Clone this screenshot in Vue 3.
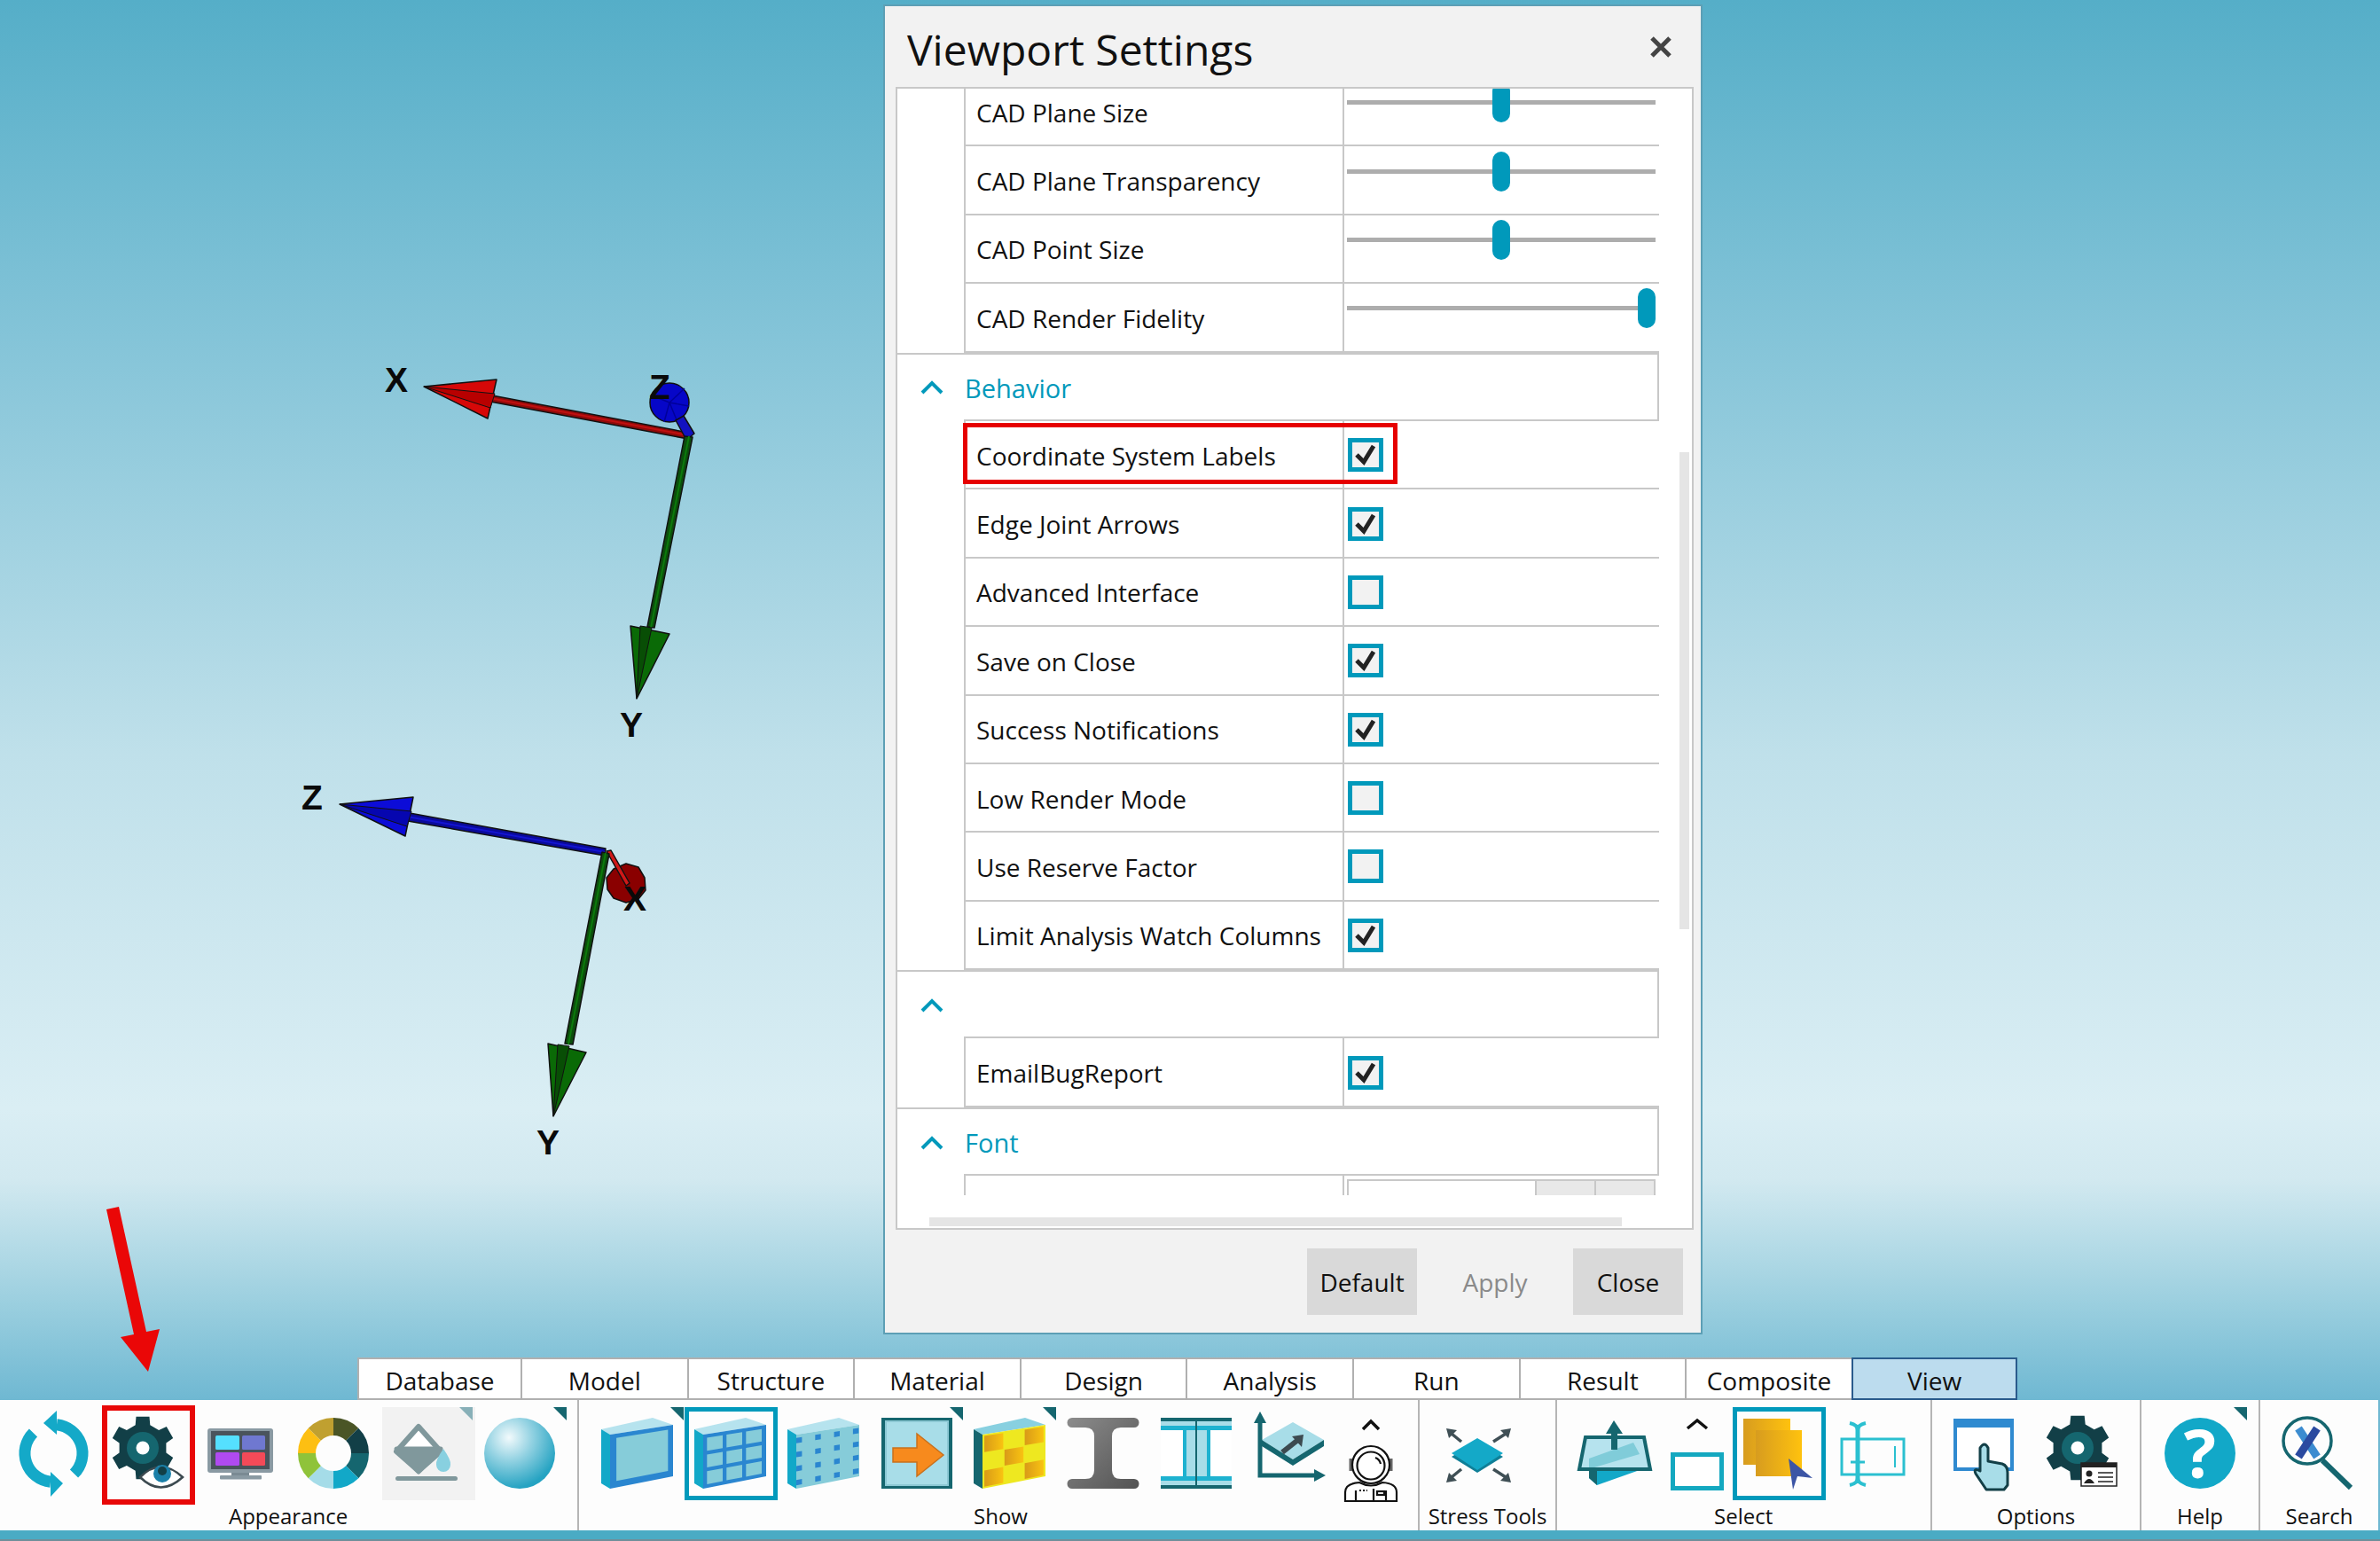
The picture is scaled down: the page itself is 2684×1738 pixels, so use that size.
<script setup>
const tabs = ['Database', 'Model', 'Structure', 'Material', 'Design', 'Analysis', 'Run', 'Result', 'Composite', 'View']

const items = [
  { kind: 'slider', label: 'CAD Plane Size', value: 50 },
  { kind: 'slider', label: 'CAD Plane Transparency', value: 50 },
  { kind: 'slider', label: 'CAD Point Size', value: 50 },
  { kind: 'slider', label: 'CAD Render Fidelity', value: 100 },
  { kind: 'section', label: 'Behavior' },
  { kind: 'check', label: 'Coordinate System Labels', on: true, flagged: true },
  { kind: 'check', label: 'Edge Joint Arrows', on: true },
  { kind: 'check', label: 'Advanced Interface', on: false },
  { kind: 'check', label: 'Save on Close', on: true },
  { kind: 'check', label: 'Success Notifications', on: true },
  { kind: 'check', label: 'Low Render Mode', on: false },
  { kind: 'check', label: 'Use Reserve Factor', on: false },
  { kind: 'check', label: 'Limit Analysis Watch Columns', on: true },
  { kind: 'section', label: '' },
  { kind: 'check', label: 'EmailBugReport', on: true },
  { kind: 'section', label: 'Font' },
  { kind: 'combo', label: '' }
]

function gear(cx, cy, ro, ri, n = 6) {
  const pts = []
  const step = (Math.PI * 2) / n
  for (let i = 0; i < n; i++) {
    const a = i * step - Math.PI / 2
    const w = step * 0.2
    const v = step * 0.3
    ;[[ri, -v], [ro, -w], [ro, w], [ri, v]].forEach(([r, d]) => {
      pts.push(`${(cx + r * Math.cos(a + d)).toFixed(1)},${(cy + r * Math.sin(a + d)).toFixed(1)}`)
    })
  }
  return pts.join(' ')
}
const gearA = gear(45, 46, 36, 27)
const gearB = gear(50, 46, 37, 28)

const donutColors = ['#4a5526', '#123f47', '#15666f', '#12a8c8', '#a5dce8', '#8fc33a', '#fdbf12', '#c0a030']
const donut = donutColors.map((color, i) => {
  const p = (r, k) => {
    const a = (k * Math.PI) / 4 - Math.PI / 2
    return `${(50 + r * Math.cos(a)).toFixed(2)} ${(52 + r * Math.sin(a)).toFixed(2)}`
  }
  return {
    color,
    d: `M${p(40, i)} A40 40 0 0 1 ${p(40, i + 1)} L${p(20, i + 1)} A20 20 0 0 0 ${p(20, i)} Z`
  }
})

const front = (u, v) => `${(21 + 71 * u).toFixed(1)},${(31 - 11 * u + v * (61 - 3 * u)).toFixed(1)}`
const quad = (u0, u1, v0, v1) => [front(u0, v0), front(u1, v0), front(u1, v1), front(u0, v1)].join(' ')

const gridCells = []
const checks = []
for (let r = 0; r < 3; r++) {
  for (let c = 0; c < 3; c++) {
    gridCells.push(quad(0.06 + c * 0.31, 0.31 + c * 0.31, 0.07 + r * 0.31, 0.31 + r * 0.31))
    if ((r + c) % 2 === 0) checks.push(quad(0.03 + c * 0.32, 0.33 + c * 0.32, 0.03 + r * 0.32, 0.33 + r * 0.32))
  }
}
const dots = []
for (let r = 0; r < 4; r++) {
  for (let c = 0; c < 4; c++) {
    dots.push(quad(c * 0.3, 0.09 + c * 0.3, 0.06 + r * 0.26, 0.16 + r * 0.26))
  }
}
</script>

<template>
  <div class="app">
    <main class="viewport">
      <svg class="canvas" width="2684" height="1531" viewBox="0 0 2684 1531">
        <g stroke="#111" stroke-width="1.5" stroke-linejoin="round">
          <polygon points="555,446 777,488 776,495 553,453" fill="#8f0a0a" />
          <line x1="555" y1="449.5" x2="776" y2="491" stroke="#c01010" stroke-width="2" />
          <polygon points="478,436 560,428 550,472" fill="#d60808" />
          <polygon points="478,436 558,444 553,460" fill="#b80000" stroke-width="1" />
          <circle cx="755" cy="454" r="22" fill="#0606c8" />
          <path d="M755 454 L735 446 M755 454 L749 476 M755 454 L764 476 M755 454 L777 458 M755 454 L772 438" stroke="#00009a" stroke-width="1.5" />
          <polygon points="762,474 771,469 783,489 774,496" fill="#1212c0" />
          <polygon points="772,492 781,493 738,708 730,707" fill="#0c4e0c" />
          <line x1="777" y1="492" x2="734" y2="708" stroke="#0c7a0c" stroke-width="2" />
          <polygon points="711,706 755,715 718,788" fill="#0a6a06" />
          <polygon points="722,706 735,708 718,788" fill="#084e05" stroke-width="1" />
        </g>
        <g stroke="#111" stroke-width="1.5" stroke-linejoin="round">
          <polygon points="462,917 683,957 682,965 460,926" fill="#0a0a9a" />
          <line x1="462" y1="921.5" x2="682" y2="961" stroke="#1414d0" stroke-width="2" />
          <polygon points="383,907 466,899 457,943" fill="#0c0cd8" />
          <polygon points="383,907 464,915 459,932" fill="#0606b0" stroke-width="1" />
          <polygon points="706,974 720,978 727,990 728,1004 720,1014 706,1018 692,1013 685,1003 684,990 692,980" fill="#8a0000" />
          <polygon points="684,960 689,959 710,996 706,999" fill="#d01818" />
          <polygon points="679,961 687,963 646,1178 637,1177" fill="#0c4e0c" />
          <line x1="683" y1="962" x2="641" y2="1178" stroke="#0c7a0c" stroke-width="2" />
          <polygon points="618,1177 661,1187 624,1259" fill="#0a6a06" />
          <polygon points="629,1178 642,1180 624,1259" fill="#084e05" stroke-width="1" />
        </g>
        <g class="axis-label">
          <text x="447" y="442">X</text>
          <text x="744" y="450">Z</text>
          <text x="712" y="831">Y</text>
          <text x="352" y="913">Z</text>
          <text x="716" y="1027">X</text>
          <text x="618" y="1302">Y</text>
        </g>
        <polygon points="120,1364 134,1361 165,1502 180,1499 167,1547 136,1508 151,1505" fill="#ea0707" />
      </svg>

      <section class="dialog">
        <header class="dialog-head">
          <h1>Viewport Settings</h1>
          <svg class="close" width="26" height="24" viewBox="0 0 26 24">
            <path d="M3 2 L23 22 M23 2 L3 22" stroke="#444" stroke-width="5" fill="none" />
          </svg>
        </header>

        <div class="panel">
          <div class="scroller">
            <div class="list">
              <template v-for="item in items" :key="item.label + item.kind">
                <div v-if="item.kind === 'section'" class="section">
                  <svg class="chev" width="26" height="16" viewBox="0 0 26 16">
                    <path d="M2 14 L13 3 L24 14" fill="none" stroke="#0099bb" stroke-width="4" />
                  </svg>
                  <span>{{ item.label }}</span>
                </div>
                <div v-else class="row">
                  <div class="cell-label">{{ item.label }}</div>
                  <div class="cell-value">
                    <div v-if="item.kind === 'slider'" class="slider">
                      <div class="track"></div>
                      <div class="thumb" :style="{ left: 'calc((100% - 20px) * ' + item.value / 100 + ')' }"></div>
                    </div>
                    <div v-else-if="item.kind === 'check'" class="box">
                      <svg v-if="item.on" width="30" height="28" viewBox="0 0 30 28">
                        <path d="M5 14 L13 22 L24 4" fill="none" stroke="#222" stroke-width="5" />
                      </svg>
                    </div>
                    <div v-else class="combo">
                      <span class="combo-field"></span>
                      <span class="combo-btn"></span>
                      <span class="combo-btn"></span>
                    </div>
                  </div>
                  <div v-if="item.flagged" class="flag"></div>
                </div>
              </template>
            </div>
          </div>
          <div class="hbar"><div class="hthumb"></div></div>
          <div class="vthumb"></div>
        </div>

        <footer class="dialog-foot">
          <button class="btn">Default</button>
          <button class="btn ghost">Apply</button>
          <button class="btn">Close</button>
        </footer>
      </section>
    </main>

    <nav class="tabs">
      <div v-for="t in tabs" :key="t" class="tab" :class="{ active: t === 'View' }">{{ t }}</div>
    </nav>

    <div class="ribbon">
      <div class="group g1">
        <div class="tools">
          <div class="tool">
            <svg viewBox="0 0 105 105">
              <g fill="none" stroke="#14a9c8" stroke-width="13">
                <path d="M53 19.7 A32.5 32.5 0 0 1 72.5 75" />
                <path d="M26.5 29 A32.5 32.5 0 0 0 46 84.3" />
              </g>
              <polygon points="53,4 38,18 53,31" fill="#14a9c8" />
              <polygon points="46,101 60,86 46,73" fill="#14a9c8" />
            </svg>
          </div>
          <div class="tool">
            <svg viewBox="0 0 105 105">
              <polygon :points="gearA" fill="#123f47" />
              <circle cx="45" cy="46" r="18" fill="#15666f" />
              <circle cx="45" cy="46" r="7.5" fill="#fff" />
              <path d="M42 79 Q65 56 90 79 Q65 102 42 79 Z" fill="#fff" stroke="#3c4a50" stroke-width="2.5" />
              <circle cx="67" cy="75" r="10" fill="#1a7fa8" />
              <circle cx="67" cy="72" r="5" fill="#123f47" />
            </svg>
            <div class="flag-tool"></div>
          </div>
          <div class="tool">
            <svg viewBox="0 0 105 105">
              <rect x="13" y="24" width="74" height="50" rx="3" fill="#8a9aa3" />
              <rect x="17" y="27" width="66" height="43" fill="#4a545c" />
              <rect x="22" y="32" width="27" height="16" rx="1.5" fill="#55e0ff" />
              <rect x="52" y="32" width="26" height="16" rx="1.5" fill="#6f78d0" />
              <rect x="22" y="51" width="27" height="15" rx="1.5" fill="#b04af0" />
              <rect x="52" y="51" width="26" height="15" rx="1.5" fill="#f44a58" />
              <rect x="40" y="74" width="20" height="4" fill="#7a8a93" />
              <rect x="27" y="77" width="47" height="4.5" rx="1" fill="#8a9aa3" />
            </svg>
          </div>
          <div class="tool">
            <svg viewBox="0 0 105 105">
              <path v-for="s in donut" :key="s.color" :d="s.d" :fill="s.color" />
            </svg>
          </div>
          <div class="tool shaded">
            <svg viewBox="0 0 105 105">
              <polygon points="87,0 102,0 102,15" fill="#88b0b8" />
              <path d="M41 22 L66 50 L41 72 L16 50 Z" fill="#fff" stroke="#80989c" stroke-width="6" stroke-linejoin="round" />
              <path d="M16 47 L66 47 L41 73 Z" fill="#80989c" stroke="#80989c" stroke-width="5" stroke-linejoin="round" />
              <path d="M69 47 Q78 60 77 65 A8 8 0 1 1 61 65 Q60 60 69 47 Z" fill="#88d0e0" />
              <rect x="15" y="78" width="70" height="5" rx="2.5" fill="#80989c" />
            </svg>
          </div>
          <div class="tool">
            <svg viewBox="0 0 105 105">
              <defs>
                <radialGradient id="ball" cx="35%" cy="28%" r="72%">
                  <stop offset="0" stop-color="#f2fafc" />
                  <stop offset="0.45" stop-color="#93d2e2" />
                  <stop offset="1" stop-color="#25a3c2" />
                </radialGradient>
              </defs>
              <ellipse cx="50" cy="52" rx="40" ry="40" fill="url(#ball)" />
              <polygon points="88,0 103,0 103,15" fill="#15666f" />
            </svg>
          </div>
        </div>
        <div class="cap">Appearance</div>
      </div>

      <div class="group g2">
        <div class="tools">
          <div class="tool">
            <svg viewBox="0 0 105 105">
              <polygon points="11,25 69,12 92,20 21,31" fill="#b6e3ee" />
              <polygon points="11,25 21,31 21,92 11,86" fill="#12a8c8" />
              <polygon points="21,31 92,20 92,78 21,92" fill="#2a86d0" />
              <polygon :points="quad(0.1, 0.92, 0.08, 0.88)" fill="#86ccd9" />
              <polygon points="89,0 104,0 104,15" fill="#15666f" />
            </svg>
          </div>
          <div class="tool selected">
            <svg viewBox="0 0 105 105">
              <polygon points="11,25 69,12 92,20 21,31" fill="#b6e3ee" />
              <polygon points="11,25 21,31 21,92 11,86" fill="#12a8c8" />
              <polygon points="21,31 92,20 92,78 21,92" fill="#2a86d0" />
              <polygon v-for="(c, i) in gridCells" :key="i" :points="c" fill="#86ccd9" />
            </svg>
          </div>
          <div class="tool">
            <svg viewBox="0 0 105 105">
              <polygon points="11,25 69,12 92,20 21,31" fill="#b6e3ee" />
              <polygon points="11,25 21,31 21,92 11,86" fill="#12a8c8" />
              <polygon points="21,31 92,20 92,78 21,92" fill="#86ccd9" />
              <polygon v-for="(c, i) in dots" :key="i" :points="c" fill="#2a86d0" />
            </svg>
          </div>
          <div class="tool">
            <svg viewBox="0 0 105 105">
              <rect x="12" y="12" width="80" height="80" fill="#15666f" />
              <rect x="17" y="16" width="70" height="72" fill="#a8dde8" stroke="#8cc8d4" stroke-width="2" />
              <polygon points="25,46 52,46 52,30 82,54 52,78 52,62 25,62" fill="#f78a1d" stroke="#c8701c" stroke-width="1.5" />
              <polygon points="89,0 104,0 104,15" fill="#15666f" />
            </svg>
          </div>
          <div class="tool">
            <svg viewBox="0 0 105 105">
              <defs>
                <linearGradient id="gold" x1="0" y1="0" x2="1" y2="0">
                  <stop offset="0" stop-color="#d99a18" />
                  <stop offset="1" stop-color="#f9c311" />
                </linearGradient>
              </defs>
              <polygon points="11,25 69,12 92,20 21,31" fill="#88d0e0" />
              <polygon points="11,25 21,31 21,92 11,86" fill="#15666f" />
              <polygon points="21,31 92,20 92,78 21,92" fill="#eee820" />
              <polygon v-for="(c, i) in checks" :key="i" :points="c" fill="url(#gold)" />
              <polygon points="89,0 104,0 104,15" fill="#15666f" />
            </svg>
          </div>
          <div class="tool">
            <svg viewBox="0 0 105 105">
              <defs>
                <linearGradient id="steel" x1="0" y1="0" x2="1" y2="1">
                  <stop offset="0" stop-color="#8c8c8c" />
                  <stop offset="1" stop-color="#525252" />
                </linearGradient>
              </defs>
              <path d="M17 12 H87 A5 5 0 0 1 87 23 H72 Q62 23 62 33 V71 Q62 81 72 81 H87 A5.5 5.5 0 0 1 87 92 H17 A5.5 5.5 0 0 1 17 81 H32 Q42 81 42 71 V33 Q42 23 32 23 H17 A5.5 5.5 0 0 1 17 12 Z" fill="url(#steel)" />
            </svg>
          </div>
          <div class="tool">
            <svg viewBox="0 0 105 105">
              <rect x="12" y="12" width="80" height="80" fill="#a8dde8" />
              <rect x="12" y="12" width="80" height="4" fill="#15666f" />
              <rect x="12" y="21" width="80" height="5" fill="#1eb2d0" />
              <rect x="12" y="78" width="80" height="5" fill="#1eb2d0" />
              <rect x="12" y="88" width="80" height="4" fill="#15666f" />
              <rect x="12" y="26" width="25" height="52" fill="#fff" />
              <rect x="68" y="26" width="24" height="52" fill="#fff" />
              <rect x="37" y="21" width="4" height="62" fill="#1eb2d0" />
              <rect x="64" y="21" width="4" height="62" fill="#1eb2d0" />
              <rect x="51" y="16" width="2" height="72" fill="#15666f" />
            </svg>
          </div>
          <div class="tool">
            <svg viewBox="0 0 105 105">
              <polygon points="56,17 91,37 56,59 21,37" fill="#a8dde8" />
              <polygon points="21,37 56,59 91,37 91,44 56,66 21,44" fill="#15666f" />
              <path d="M19 14 V77 H85" fill="none" stroke="#15666f" stroke-width="5" />
              <polygon points="19,5 26,18 12,18" fill="#15666f" />
              <polygon points="93,77 80,70 80,84" fill="#15666f" />
              <path d="M44 51 L63 36" stroke="#3c4a50" stroke-width="6" />
              <polygon points="68,31 66,45 55,33" fill="#3c4a50" />
            </svg>
          </div>
          <div class="tool narrow">
            <svg viewBox="0 0 70 105">
              <path d="M26 25 L35 16 L44 25" fill="none" stroke="#111" stroke-width="3.5" />
              <g fill="none" stroke="#111" stroke-width="2.2">
                <path d="M13 58 V72 M57 58 V72" stroke-width="5" stroke="#666" />
                <circle cx="35" cy="65" r="21" fill="#fff" />
                <circle cx="35" cy="66" r="15.5" />
                <path d="M40 57 Q45 59 46 64" />
                <path d="M6 106 V96 Q6 86 22 85 Q35 92 48 85 Q64 86 64 96 V106 Z" fill="#fff" />
                <path d="M18 94 V106 M52 94 V106 M38 92 V106" />
                <rect x="42" y="95" width="8" height="4" />
                <path d="M22 94 H31" stroke-dasharray="2 2" />
              </g>
            </svg>
          </div>
        </div>
        <div class="cap">Show</div>
      </div>

      <div class="group g3">
        <div class="tools">
          <div class="tool">
            <svg viewBox="0 0 105 105">
              <polygon points="51,38 80,56 51,74 22,56" fill="#0f7f97" />
              <polygon points="51,35 80,52 51,71 22,52" fill="#14a9c8" />
              <g fill="none" stroke="#3f4f55" stroke-width="3.5">
                <path d="M33 39 L22 30" />
                <path d="M69 39 L83 30" />
                <path d="M33 70 L22 79" />
                <path d="M69 70 L83 79" />
              </g>
              <g fill="#3f4f55">
                <polygon points="16,24 28,26 19,35" />
                <polygon points="89,24 77,26 86,35" />
                <polygon points="16,85 19,74 28,83" />
                <polygon points="89,85 86,74 77,83" />
              </g>
            </svg>
          </div>
        </div>
        <div class="cap">Stress Tools</div>
      </div>

      <div class="group g4">
        <div class="tools">
          <div class="tool">
            <svg viewBox="0 0 105 105">
              <polygon points="23,71 80,71 32,88 23,80" fill="#12a8c8" />
              <polygon points="23,71 32,71 32,88 23,80" fill="#15666f" />
              <polygon points="19,34 85,34 92,70 12,70" fill="#b6e3ee" />
              <polygon points="23,58 73,40 80,53 29,68 23,68" fill="#80ccd9" />
              <polygon points="19,34 85,34 92,70 12,70" fill="none" stroke="#15666f" stroke-width="4" />
              <rect x="48" y="28" width="7" height="20" fill="#15666f" />
              <polygon points="51,15 42,30 61,30" fill="#15666f" />
            </svg>
          </div>
          <div class="tool slim">
            <svg viewBox="0 0 80 105">
              <path d="M29 24 L40 15 L51 24" fill="none" stroke="#111" stroke-width="3.5" />
              <rect x="12.5" y="53.5" width="55" height="38" fill="#fff" stroke="#14a8c0" stroke-width="5" />
            </svg>
          </div>
          <div class="tool selected">
            <svg viewBox="0 0 105 105">
              <defs>
                <linearGradient id="amber" x1="0" y1="0" x2="1" y2="0">
                  <stop offset="0" stop-color="#d79c1f" />
                  <stop offset="1" stop-color="#ffc20e" />
                </linearGradient>
              </defs>
              <rect x="12" y="13" width="53" height="52" fill="url(#amber)" />
              <rect x="26" y="26" width="52" height="52" fill="url(#amber)" />
              <polygon points="63,58 90,80 73,78 68,93" fill="#3c55a5" />
            </svg>
          </div>
          <div class="tool">
            <svg viewBox="0 0 105 105">
              <g fill="none" stroke="#2bc0d0" stroke-width="3">
                <rect x="18" y="36" width="70" height="40" />
                <path d="M78 44 V68" stroke-width="2" />
                <path d="M36 20 V86" stroke-width="5" />
                <path d="M27 18 Q36 20 36 26 Q36 20 45 18" stroke-width="4" />
                <path d="M27 88 Q36 86 36 80 Q36 86 45 88" stroke-width="4" />
                <path d="M28 62 H44" stroke-width="3" />
              </g>
            </svg>
          </div>
        </div>
        <div class="cap">Select</div>
      </div>

      <div class="group g5">
        <div class="tools">
          <div class="tool">
            <svg viewBox="0 0 105 105">
              <rect x="17" y="15" width="64" height="55" fill="#fff" stroke="#2f8ad0" stroke-width="4" />
              <rect x="15" y="13" width="68" height="10" fill="#2f8ad0" />
              <path d="M45 46 Q50 38 54 46 V61 L70 64 Q76 66 76 74 V88 L72 93 H52 L40 75 Q37 68 45 72 Z" fill="#a8dde8" stroke="#123f47" stroke-width="3" stroke-linejoin="round" />
            </svg>
          </div>
          <div class="tool">
            <svg viewBox="0 0 105 105">
              <polygon :points="gearB" fill="#123f47" />
              <circle cx="50" cy="46" r="18" fill="#15666f" />
              <circle cx="50" cy="46" r="7.5" fill="#fff" />
              <rect x="54" y="63" width="40" height="26" fill="#fff" stroke="#222" stroke-width="1.5" />
              <rect x="54" y="63" width="40" height="5" fill="#222" />
              <circle cx="63" cy="75" r="3.5" fill="#222" />
              <path d="M57 86 Q63 76 69 86 Z" fill="#222" />
              <path d="M73 74 H90 M73 79 H90 M73 84 H90" stroke="#222" stroke-width="1.5" />
            </svg>
          </div>
        </div>
        <div class="cap">Options</div>
      </div>

      <div class="group g6">
        <div class="tools">
          <div class="tool">
            <svg viewBox="0 0 105 105">
              <ellipse cx="52" cy="52" rx="40" ry="40" fill="#12a8c8" />
              <text class="qmark" x="52" y="80">?</text>
              <polygon points="90,0 105,0 105,15" fill="#15666f" />
            </svg>
          </div>
        </div>
        <div class="cap">Help</div>
      </div>

      <div class="group g7">
        <div class="tools">
          <div class="tool">
            <svg viewBox="0 0 105 105">
              <path d="M31 24 L52 56" stroke="#3c8cd0" stroke-width="9" />
              <path d="M52 24 L31 56" stroke="#2a4aa0" stroke-width="9" />
              <ellipse cx="41" cy="38" rx="27" ry="26" fill="none" stroke="#15666f" stroke-width="3.5" />
              <path d="M58 60 L90 91" stroke="#15666f" stroke-width="6" />
            </svg>
          </div>
        </div>
        <div class="cap">Search</div>
      </div>
    </div>

    <div class="strip"></div>
  </div>
</template>

<style>
html, body { margin: 0; padding: 0; }
</style>

<style scoped>
.app {
  width: 2684px;
  height: 1738px;
  display: flex;
  flex-direction: column;
  overflow: hidden;
  font-family: "Open Sans", "Noto Sans", sans-serif;
  color: #111;
  background: linear-gradient(180deg, #55aec8 0, #84c4d8 380px, #bfe0ea 850px, #daeef4 1250px, #d2e9f0 1330px, #9bcfdf 1470px, #6fb8d2 1579px);
}
.viewport { position: relative; height: 1531px; flex: none; }
.canvas { position: absolute; left: 0; top: 0; overflow: visible; }
.axis-label text {
  font-family: "Liberation Sans", sans-serif;
  font-weight: 700;
  font-size: 39px;
  text-anchor: middle;
  fill: #0a0a0a;
}

.dialog {
  position: absolute;
  left: 996px;
  top: 5px;
  width: 920px;
  height: 1496px;
  display: flex;
  flex-direction: column;
  background: #f2f2f2;
  border: 2px solid #5d9fb5;
}
.dialog-head {
  height: 91px;
  display: flex;
  align-items: center;
  justify-content: space-between;
  padding: 0 32px 0 25px;
  flex: none;
}
.dialog-head h1 {
  margin: 0;
  font-size: 48px;
  font-weight: 400;
  color: #111;
  padding-top: 5px;
}

.panel {
  position: relative;
  margin: 0 8px 0 12px;
  flex: none;
  height: 1289px;
  box-sizing: border-box;
  background: #fff;
  border: 2.5px solid #c8c8c8;
  display: flex;
  flex-direction: column;
}
.scroller { height: 1248px; overflow: hidden; flex: none; }
.list { margin-top: -12px; width: 859px; }

.section {
  position: relative;
  height: 77.4px;
  box-sizing: border-box;
  border-top: 2px solid #c8c8c8;
  border-right: 2px solid #c8c8c8;
  display: flex;
  align-items: center;
  font-size: 29px;
  color: #0099bb;
  font-weight: 500;
}
.section::after {
  content: "";
  position: absolute;
  left: 75px;
  right: 0;
  bottom: 0;
  height: 2px;
  background: #c8c8c8;
}
.chev { margin-left: 26px; flex: none; }
.section span { margin-left: 24px; }

.row {
  position: relative;
  height: 77.4px;
  display: grid;
  grid-template-columns: 427px 357px;
  margin-left: 75px;
  box-sizing: border-box;
  border-bottom: 2px solid #c8c8c8;
}
.cell-label {
  display: flex;
  align-items: center;
  border-left: 2px solid #c8c8c8;
  padding: 2px 0 0 12px;
  font-size: 28px;
  white-space: nowrap;
}
.cell-value {
  display: flex;
  align-items: center;
  border-left: 2px solid #c8c8c8;
  padding: 0 3px;
}
.slider { position: relative; width: 348px; height: 45px; margin-top: -20px; }
.track { position: absolute; left: 0; right: 0; top: 20px; height: 5px; background: #adadad; }
.thumb { position: absolute; top: 0; width: 20px; height: 45px; border-radius: 10px; background: #0099bb; }
.box {
  width: 40px;
  height: 38px;
  margin-left: 1px;
  box-sizing: border-box;
  border: 5px solid #0099bb;
  background: #f2f2f2;
  display: flex;
  align-items: center;
  justify-content: center;
  margin-top: 1px;
}
.combo { display: flex; width: 348px; height: 60px; margin-top: 4px; align-self: flex-start; border: 2px solid #c8c8c8; box-sizing: border-box; }
.combo-field { flex: 1; background: #fff; }
.combo-btn { width: 67px; background: #e8e8e8; border-left: 2px solid #c8c8c8; box-sizing: border-box; }
.flag {
  position: absolute;
  left: -1px;
  top: 2px;
  width: 490px;
  height: 69px;
  box-sizing: border-box;
  border: 5px solid #e60000;
}
.hbar { flex: 1; position: relative; }
.hthumb { position: absolute; left: 36px; width: 781px; top: 25px; height: 10px; background: #e5e5e5; }
.vthumb { position: absolute; right: 3px; top: 410px; width: 11px; height: 538px; background: #e5e5e5; }

.dialog-foot {
  display: flex;
  justify-content: flex-end;
  padding: 21px 20px 0 0;
}
.btn {
  width: 124px;
  height: 75px;
  border: 0;
  background: #d9d9d9;
  font: 400 28px "Open Sans", sans-serif;
  color: #111;
  padding: 0;
}
.btn.ghost { width: 176px; background: transparent; color: #8a8a8a; }

.tabs { display: flex; height: 48px; margin-left: 403px; flex: none; }
.tab {
  width: 187.6px;
  box-sizing: border-box;
  background: #fff;
  border: 2px solid #b0b0b0;
  border-right-width: 0;
  display: flex;
  align-items: center;
  justify-content: center;
  font-size: 28px;
  padding-top: 4px;
}
.tab:first-child { width: 184px; }
.tab.active {
  background: #bcdcee;
  border: 2px solid #2a5b8c;
}

.ribbon { display: flex; height: 147px; width: 2682px; background: #fdfdfd; flex: none; }
.group {
  box-sizing: border-box;
  padding-top: 8px;
  display: flex;
  flex-direction: column;
  border-right: 2px solid #b5b5b5;
  flex: none;
}
.group:last-child { border-right: 0; }
.tools { display: flex; height: 105px; flex: none; }
.tool { position: relative; width: 105px; height: 105px; flex: none; box-sizing: border-box; }
.tool svg { display: block; position: absolute; left: 0; top: 0; width: 105px; height: 105px; overflow: visible; }
.tool.narrow { width: 70px; margin-left: 4px; }
.tool.narrow svg { width: 70px; }
.tool.slim { width: 80px; }
.tool.slim svg { width: 80px; }
.tool.shaded { background: #f2f2f2; }
.tool.selected { outline: 5px solid #0099bb; outline-offset: -5px; }
.flag-tool {
  position: absolute;
  left: -1px;
  top: -2px;
  width: 105px;
  height: 112px;
  box-sizing: border-box;
  border: 6px solid #e80808;
}
.cap {
  flex: 1;
  display: flex;
  align-items: center;
  justify-content: center;
  font-size: 24px;
  padding-bottom: 0;
}
.g1 { width: 653px; }
.g2 { width: 948px; }
.g3 { width: 155px; }
.g4 { width: 423px; }
.g5 { width: 236px; }
.g6 { width: 134px; }
.g7 { width: 133px; }
.g1 .tools { padding-left: 11px; }
.g2 .tools { padding-left: 14px; }
.g3 .tools { padding-left: 14px; }
.g4 .tools { padding-left: 13px; }
.g5 .tools { padding-left: 9px; }
.g6 .tools { padding-left: 14px; }
.g7 .tools { padding-left: 12px; }
.g1 .cap { justify-content: flex-start; padding-left: 258px; }
.g2 .cap { justify-content: flex-start; padding-left: 445px; }
.g4 .cap { justify-content: flex-start; padding-left: 177px; }

.strip { height: 12px; flex: none; background: #4aabc4; box-sizing: border-box; border-bottom: 2px solid #6f8f9a; }
.qmark {
  font-family: "Open Sans", sans-serif;
  font-weight: 700;
  font-size: 76px;
  fill: #fff;
  text-anchor: middle;
}
</style>
